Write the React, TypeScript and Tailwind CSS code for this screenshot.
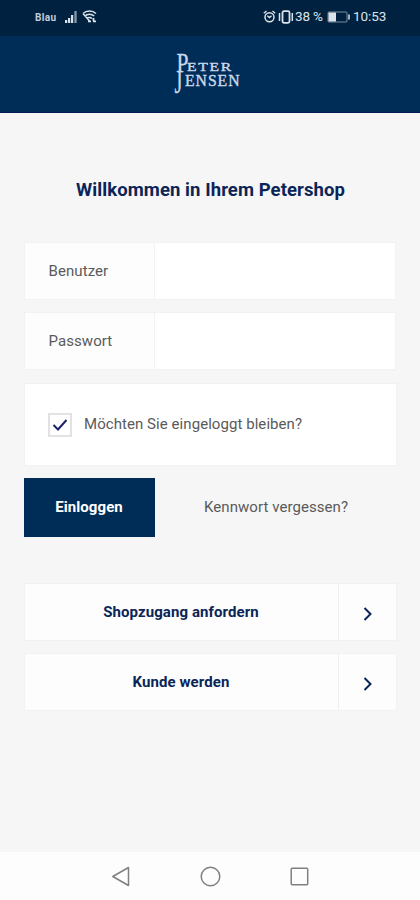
import { ReactNode, useState } from "react";

const StatusBar = () => (
  <div className="flex h-9 items-center bg-[#002240] pl-[35px] pr-[34px] text-[#dbe3ea]">
    <span className="-mt-px w-[30px] text-[10px] font-bold leading-none tracking-[0.4px] text-[#c3ced8]">Blau</span>
    {/* signal strength */}
    <svg width="12" height="12" viewBox="0 0 12 12" className="-mt-[2px] fill-current">
      <rect x="0" y="9" width="2.200" height="3" />
      <rect x="3" y="7" width="2.200" height="5" />
      <rect x="6" y="4" width="2.200" height="8" />
      <rect x="9.300" y="0" width="2.400" height="12" opacity="0.6" />
    </svg>
    {/* wifi with traffic arrows */}
    <svg width="15" height="14" viewBox="0 0 15 14" className="-mt-[4px] ml-[5px] fill-none stroke-current">
      <path d="M1 4.500C4.500 1 10.500 1 14 4.500M2.800 7C5.500 4.500 9.500 4.500 12.200 7M5 9.500c1.500-1.500 3.500-1.500 5 0M1 4.500l6.500 7.500" strokeWidth="1.500" />
      <path d="M6 12.300h3M11 12.300h3M11.500 9v3" strokeWidth="1.800" />
    </svg>

    <div className="-mt-[3px] ml-auto flex items-center">
      {/* alarm */}
      <svg width="13" height="13" viewBox="0 0 13 13" className="-ml-px mr-px fill-none stroke-current">
        <circle cx="6.500" cy="7.200" r="4.500" strokeWidth="1.500" />
        <path d="M.8 3.200 3.500 1M12.200 3.200 9.500 1M4.300 5.800l2.200 1.700 2-1.700" strokeWidth="1.400" />
      </svg>
      {/* vibrate */}
      <svg width="17" height="14" viewBox="0 0 17 14" className="ml-px fill-none stroke-current">
        <rect x="4.500" y="1.200" width="7" height="11.600" rx="1.500" strokeWidth="1.800" />
        <path d="M1.500 3v8M14.300 3v8" strokeWidth="1.500" />
      </svg>
      <span className="w-[31px] whitespace-nowrap text-[13.5px] leading-none tracking-[-0.2px]">38 %</span>
      {/* battery */}
      <svg width="24" height="12" viewBox="0 0 24 12" className="ml-px mr-[2px] fill-none stroke-current">
        <rect x="1" y="1" width="19" height="10" rx="1" strokeWidth="1" opacity="0.55" />
        <rect x="1.500" y="1.500" width="7.500" height="9" stroke="none" className="fill-current" />
        <path d="M22 3.500v5" strokeWidth="1.500" />
      </svg>
      <span className="w-[33px] whitespace-nowrap text-[13.5px] leading-none tracking-[-0.1px]">10:53</span>
    </div>
  </div>
);

const Logo = () => (
  <svg
    width="72"
    height="60"
    viewBox="0 0 72 60"
    className="fill-[#c9d9ea] stroke-[#c9d9ea] font-['Liberation_Serif',serif]"
  >
    <text x="3.500" y="33" fontSize="27" textLength="12" lengthAdjust="spacingAndGlyphs" strokeWidth="0.300">P</text>
    <text x="14" y="32" fontSize="13.500" textLength="46" lengthAdjust="spacingAndGlyphs" strokeWidth="0.400" letterSpacing="1.500">ETER</text>
    <text x="1.500" y="54" fontSize="33" textLength="8" lengthAdjust="spacingAndGlyphs" strokeWidth="0.300">J</text>
    <text x="12" y="46.500" fontSize="16" textLength="55.500" lengthAdjust="spacingAndGlyphs" strokeWidth="0.400" letterSpacing="1">ENSEN</text>
  </svg>
);

interface FieldProps {
  label: string;
  type: string;
}

const Field = ({ label, type }: FieldProps) => (
  <label className="flex h-[58px] w-[372px] border border-[#f2f2f2] bg-white">
    <span className="flex w-[130px] items-center border-r border-[#f2f2f2] bg-[#fdfdfd] pl-[23.5px] text-[15px] tracking-[0.08px] text-[#5a5a5a]">
      {label}
    </span>
    <input type={type} className="min-w-0 flex-1 px-4 text-sm outline-none" />
  </label>
);

const LinkButton = ({ children }: { children: ReactNode }) => (
  <button className="flex h-[58px] w-[373px] border border-[#f2f2f2] bg-[#fdfdfd] text-[#0b2558]">
    <span className="flex h-full flex-1 items-center justify-center pr-px text-[15px] font-bold tracking-[0.08px]">
      {children}
    </span>
    <span className="flex h-full w-[58px] items-center justify-center border-l border-[#f0f0f0]">
      <svg width="10" height="16" viewBox="0 0 10 16" className="mt-[3px] fill-none stroke-current">
        <path d="M1.500 2l6 6-6 6" strokeWidth="2" />
      </svg>
    </span>
  </button>
);

const NavBar = () => (
  <nav className="flex h-12 items-center justify-between bg-[#fdfdfd] pl-[111px] pr-[111px] text-[#808080]">
    <svg width="19" height="21" viewBox="0 0 19 21" className="fill-none stroke-current">
      <path d="M17.500 1.500v18L1.800 10.500z" strokeWidth="1.500" strokeLinejoin="round" />
    </svg>
    <svg width="21" height="21" viewBox="0 0 21 21" className="fill-none stroke-current">
      <circle cx="10.500" cy="10.500" r="9.300" strokeWidth="1.500" />
    </svg>
    <svg width="19" height="19" viewBox="0 0 19 19" className="fill-none stroke-current">
      <rect x="1.200" y="1.200" width="16.500" height="16.500" rx="1" strokeWidth="1.500" />
    </svg>
  </nav>
);

export default function App() {
  const [stayLoggedIn, setStayLoggedIn] = useState(true);

  return (
    <div className="flex h-[900px] w-[420px] flex-col bg-[#f6f6f6] font-[Roboto,sans-serif]">
      <StatusBar />
      <header className="flex h-[77px] justify-center border-b border-[#001d55] bg-[#002c58] pt-[3px] pr-[2px]">
        <Logo />
      </header>

      <main className="flex flex-1 flex-col pl-6">
        <h1 className="mt-[63px] -ml-6 pl-px text-center text-[18.5px] font-bold leading-7 tracking-[0.08px] text-[#0b2558]">
          Willkommen in Ihrem Petershop
        </h1>

        <div className="mt-[38px] flex flex-col gap-3">
          <Field label="Benutzer" type="text" />
          <Field label="Passwort" type="password" />
        </div>

        <label className="mt-[13px] flex h-[83px] w-[373px] items-center border border-[#f2f2f2] bg-white pl-[23px] text-[15px] tracking-[0.06px] text-[#5a5a5a]">
          <input
            type="checkbox"
            className="sr-only"
            checked={stayLoggedIn}
            onChange={(e) => setStayLoggedIn(e.target.checked)}
          />
          <span className="mr-3 flex size-6 items-center justify-center border-2 border-[#e2e2e2] bg-white text-[#1b2466]">
            {stayLoggedIn && (
              <svg width="16" height="14" viewBox="0 0 16 14" className="fill-none stroke-current">
                <path d="M1.500 7l4.500 4.500L14.500 2" strokeWidth="2" />
              </svg>
            )}
          </span>
          Möchten Sie eingeloggt bleiben?
        </label>

        <div className="mt-3 flex h-[59px] items-center">
          <button className="h-full w-[131px] bg-[#002c58] pr-px text-[15px] font-bold tracking-[0.08px] text-white">
            Einloggen
          </button>
          <a className="ml-[49px] text-[15px] tracking-[0.06px] text-[#5a5a5a]">Kennwort vergessen?</a>
        </div>

        <div className="mt-[46px] flex flex-col gap-3">
          <LinkButton>Shopzugang anfordern</LinkButton>
          <LinkButton>Kunde werden</LinkButton>
        </div>
      </main>

      <NavBar />
    </div>
  );
}
